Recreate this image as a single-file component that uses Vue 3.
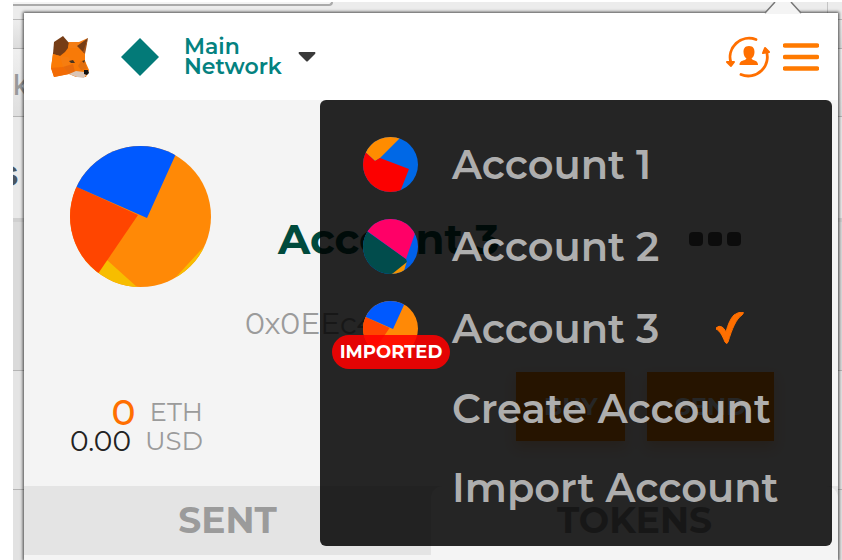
<template>
    <div class="browser">
        <div class="backdrop" aria-hidden="true">
            <div class="toolbar">
                <div class="address-bar"></div>
                <div class="toolbar-end"></div>
            </div>
            <div class="strip strip-nav"></div>
            <div class="strip strip-search">k</div>
            <div class="strip strip-tabs">s</div>
            <div class="strip strip-upper"></div>
            <div class="strip strip-lower"></div>
            <div class="strip strip-rest"></div>
        </div>
        <svg class="notch" viewBox="0 0 38 12" aria-hidden="true">
            <path d="M0 12 11 0H27L38 12Z" fill="#f4f4f4" />
            <path d="M1 11 11 0M27 0 37 11" fill="none" stroke="#777" stroke-width="1.5" />
        </svg>

        <main class="popup">
            <header class="app-header">
                <svg class="fox" viewBox="0 0 40 42" role="img" aria-label="Fox">
                    <path d="M3 17 19 6 29 6 35 17 35 25 39 34 36 41 26 41 19 38 4 41 1 32Z" fill="#f87a08" />
                    <path d="M13 0 19 7 18 12 15 16 10 20 3 18 4 6Z" fill="#763d16" />
                    <path d="M38 2 29 6 19 6 18 12 29 12Z" fill="#f47d14" />
                    <path d="M38 2 34 17 27 10Z" fill="#763d16" />
                    <path d="M38 2 36 13 35 18 33 16Z" fill="#a3531a" />
                    <path d="M3 18 10 20 15 30 1 32Z" fill="#fa7b06" />
                    <path d="M1 32 13 31 19 38 4 41Z" fill="#f26b05" />
                    <path d="M10 20 13 31 24 27 18 21Z" fill="#f67d10" />
                    <path d="M13 31 23 28 25 36 19 38Z" fill="#e86b0c" />
                    <path d="M31 25 35 25 37 33 31 34 28 30Z" fill="#e2700f" />
                    <path d="M19 38 26 35 34 36 36 39 34 42 27 41Z" fill="#dac5b6" />
                    <path d="M34 34 38 34 39 37 37 39 34 38Z" fill="#111" />
                    <path d="M19 25 23 24 25 27 21 27Z" fill="#4a3520" />
                    <path d="M32 25 35 24 34 27Z" fill="#4a3520" />
                </svg>
                <button class="network" type="button">
                    <svg class="diamond" viewBox="0 0 40 40" aria-hidden="true">
                        <path d="M20 1 39 20 20 39 1 20Z" fill="#037a78" />
                    </svg>
                    <span class="network-name">Main<br />Network</span>
                    <svg class="caret" viewBox="0 0 18 10" aria-hidden="true">
                        <path d="M1 0H17Q18 1 17 2L10 9Q9 10 8 9L1 2Q0 1 1 0Z" fill="#3a3a3a" />
                    </svg>
                </button>
                <div class="header-actions">
                    <button class="icon-button" type="button" aria-label="Switch account">
                        <svg class="switcher" viewBox="0 0 44 42" fill="none">
                            <path d="M30 3.500A19 19 0 0 0 5 27M15 38.500A19 19 0 0 0 40 14" stroke="#ff6f00" stroke-width="2.800" stroke-linecap="round" />
                            <path d="M1 26 8 26 5 30ZM37 17 39 12 43 16Z" fill="#ff6f00" stroke="#ff6f00" stroke-width="2" stroke-linejoin="round" />
                            <path d="M23 10C18.500 10 17.500 13 17.500 16C17.500 19.500 19 21.500 20.500 22.500L19 24C15.500 25 13.500 25.500 13.500 29H32C32 25.500 30 25 27 24L25.500 22.500C27 21.500 28.500 19.500 28.500 16C28.500 13 27.500 10 23 10Z" fill="#ff6f00" />
                        </svg>
                    </button>
                    <button class="icon-button" type="button" aria-label="Menu">
                        <svg class="hamburger" viewBox="0 0 36 28">
                            <path d="M2 2.500H34M2 14H34M2 25.500H34" stroke="#ff7a00" stroke-width="4.500" stroke-linecap="round" />
                        </svg>
                    </button>
                </div>
            </header>

            <div class="content">
                <section class="account">
                    <div class="account-side">
                        <svg class="identicon" viewBox="0 0 141 141" aria-hidden="true">
                            <clipPath id="round-main"><circle cx="70.500" cy="70.500" r="70.500" /></clipPath>
                            <g clip-path="url(#round-main)">
                                <path v-for="(shape, i) in accounts[2].shapes" :key="i" :d="shape.d" :fill="shape.fill" />
                            </g>
                        </svg>
                        <div class="balance">
                            <div class="balance-row">
                                <span class="eth">0</span><span class="unit">ETH</span>
                            </div>
                            <div class="balance-row">
                                <span class="usd">0.00</span><span class="unit">USD</span>
                            </div>
                        </div>
                    </div>
                    <div class="account-main">
                        <div class="name-row">
                            <h1 class="account-name">Account 3</h1>
                            <button class="dots" type="button" aria-label="Account options">
                                <i></i><i></i><i></i>
                            </button>
                        </div>
                        <p class="account-address">0x0EEc4</p>
                        <div class="buttons">
                            <button class="action" type="button">BUY</button>
                            <button class="action" type="button">SEND</button>
                        </div>
                    </div>
                </section>

                <nav class="tabs">
                    <button class="tab" type="button">SENT</button>
                    <button class="tab active" type="button">TOKENS</button>
                </nav>

                <div class="account-menu">
                    <button v-for="(account, index) in accounts" :key="account.name" class="menu-item" type="button">
                        <span class="menu-icon">
                            <svg class="identicon-small" :viewBox="account.viewBox" aria-hidden="true">
                                <clipPath :id="`round-${index}`">
                                    <circle :cx="account.radius" :cy="account.radius" :r="account.radius" />
                                </clipPath>
                                <g :clip-path="`url(#round-${index})`">
                                    <path v-for="(shape, i) in account.shapes" :key="i" :d="shape.d" :fill="shape.fill" />
                                </g>
                            </svg>
                            <span v-if="account.imported" class="badge">IMPORTED</span>
                        </span>
                        <span class="menu-label">{{ account.name }}</span>
                        <svg v-if="account.selected" class="check" viewBox="0 0 28 32" role="img" aria-label="Selected">
                            <path d="M0 16Q3 13 6 15Q8 16 10 20Q13 8 18 3Q22 0 27 0Q28 1 26 3C20 7 16 17 12 30Q11 33 9 30C6 23 4 19 0 17Z" fill="#ff6f00" stroke="#ff6f00" stroke-width="1" />
                        </svg>
                    </button>
                    <button v-for="action in actions" :key="action" class="menu-item menu-action" type="button">
                        <span class="menu-label">{{ action }}</span>
                    </button>
                </div>
            </div>
        </main>
    </div>
</template>

<script setup>
const accounts = [
    {
        name: 'Account 1',
        viewBox: '0 0 55 55',
        radius: 27.5,
        shapes: [
            { d: 'M0 0H55V55H0Z', fill: '#0068e6' },
            { d: 'M0 0H38L17 21 12 24 0 13Z', fill: '#ff8c00' },
            { d: 'M0 13 12 24 17 21 46 32 37 55H0Z', fill: '#fc0000' },
        ],
    },
    {
        name: 'Account 2',
        viewBox: '0 0 55 55',
        radius: 27.5,
        shapes: [
            { d: 'M0 0H55V55H0Z', fill: '#0060ea' },
            { d: 'M28 55 44 42 40 55Z', fill: '#f59300' },
            { d: 'M0 10 5 13 43 40 44 43 29 55H0Z', fill: '#014c4c' },
            { d: 'M0 9V0H57L43 40Z', fill: '#ff0067' },
        ],
    },
    {
        name: 'Account 3',
        viewBox: '0 0 141 141',
        radius: 70.5,
        imported: true,
        selected: true,
        shapes: [
            { d: 'M0 0H141V141H0Z', fill: '#ff8906' },
            { d: 'M37 114 67 141H0V114ZM141 94 130 105 106 131 106 141H141Z', fill: '#f7bd00' },
            { d: 'M0 38 7 41 68 69 19 141 0 141Z', fill: '#ff4500' },
            { d: 'M0 38V0H110L105 10 77 72Z', fill: '#0059ff' },
        ],
    },
]

const actions = ['Create Account', 'Import Account']
</script>

<style>
body {
    background: #ffffff;
}
</style>

<style scoped>
.browser {
    box-sizing: border-box;
    position: relative;
    display: flex;
    min-height: 100vh;
    padding: 13px 4px 0 24px;
    overflow: hidden;
    font-family: Montserrat, Inter, sans-serif;
}

button {
    padding: 0;
    border: 0;
    background: none;
    font-family: inherit;
    text-align: left;
}

svg {
    display: block;
    flex-shrink: 0;
}

/* page behind the popup */
.backdrop {
    position: absolute;
    inset: 2px 0 0 13px;
    display: flex;
    flex-direction: column;
    background: #e2e2e2;
}

.toolbar {
    display: flex;
    justify-content: space-between;
    height: 17px;
    background: #ececec;
    border-bottom: 1px solid #b9b9b9;
}

.address-bar {
    width: 318px;
    height: 2px;
    border-right: 2px solid #aaa;
    border-bottom: 2px solid #aaa;
    border-bottom-right-radius: 8px;
    background: #f4f4f4;
}

.toolbar-end {
    width: 14px;
    border-left: 1px solid #c4c4c4;
}

.strip {
    box-sizing: border-box;
    border-bottom: 1px solid #b4b4b4;
    color: #999;
    font-family: Inter, sans-serif;
    font-size: 28px;
    line-height: 32px;
}

.strip-nav {
    height: 29px;
    background: linear-gradient(#ededed, #dcdcdc);
}

.strip-search {
    height: 68px;
    padding-top: 20px;
    background: linear-gradient(#f0f0f0, #dedede);
    font-weight: 500;
}

.strip-tabs {
    height: 105px;
    padding-top: 40px;
    border-bottom: 4px solid #cfcfcf;
    background: #e9e9e9;
    color: #4a5560;
    font-size: 36px;
    font-weight: 600;
    text-indent: -14px;
    overflow: hidden;
}

.strip-upper {
    height: 149px;
    background: #dadada;
}

.strip-lower {
    height: 119px;
    background: #e4e4e4;
}

.strip-rest {
    flex: 1;
    border: 0;
}

.notch {
    position: absolute;
    top: 2px;
    right: 40px;
    z-index: 1;
    width: 38px;
    height: 12px;
}

.popup {
    position: relative;
    flex: 1;
    display: flex;
    flex-direction: column;
    background: #f4f4f4;
    box-shadow: 0 0 3px 1px rgba(0, 0, 0, 0.7);
}

.app-header {
    display: flex;
    align-items: center;
    height: 87px;
    padding: 0 19px 0 26px;
    background: #ffffff;
}

.fox {
    width: 40px;
    height: 42px;
}

.network {
    display: flex;
    align-items: center;
    margin-left: 30px;
}

.diamond {
    width: 40px;
    height: 40px;
}

.network-name {
    margin: 0 16px 0 24px;
    color: #048280;
    font-size: 22px;
    font-weight: 600;
    line-height: 20px;
}

.caret {
    width: 18px;
    height: 10px;
}

.header-actions {
    display: flex;
    align-items: center;
    gap: 13px;
    margin-left: auto;
}

.switcher {
    width: 44px;
    height: 42px;
}

.hamburger {
    width: 36px;
    height: 28px;
}

.content {
    position: relative;
    flex: 1;
}

.account {
    display: flex;
    gap: 34px;
    padding: 46px 64px 30px 46px;
}

.account-side {
    width: 141px;
}

.identicon {
    width: 141px;
    height: 141px;
}

.balance {
    margin-top: 111px;
    padding-right: 8px;
}

.balance-row {
    display: flex;
    align-items: center;
    justify-content: flex-end;
    gap: 14px;
    color: #222;
    font-size: 28px;
    line-height: 29px;
}

.eth {
    color: #ff6f00;
    font-size: 36px;
    font-weight: 500;
}

.unit {
    color: #9b9b9b;
    font-size: 26px;
}

.account-main {
    flex: 1;
}

.name-row {
    display: flex;
    align-items: center;
    justify-content: space-between;
    margin-top: 69px;
    padding: 0 33px;
}

.account-name {
    margin: 0;
    color: #004a3c;
    font-size: 42px;
    font-weight: 700;
    line-height: 48px;
}

.dots {
    display: flex;
    gap: 5px;
}

.dots i {
    width: 14px;
    height: 14px;
    border-radius: 4px;
    background: #555;
}

.account-address {
    margin: 43px 0 30px;
    color: #9b9b9b;
    font-size: 30px;
    line-height: 36px;
}

.buttons {
    display: flex;
    justify-content: flex-end;
    gap: 22px;
}

.action {
    padding: 0 28px;
    background: #ff8400;
    box-shadow: 0 6px 12px rgba(247, 134, 28, 0.3);
    color: #ffffff;
    font-size: 24px;
    font-weight: 700;
    line-height: 69px;
}

.tabs {
    display: flex;
    background: #e4e4e4;
}

.tab {
    flex: 1;
    color: #9b9b9b;
    font-size: 36px;
    font-weight: 700;
    line-height: 69px;
    text-align: center;
}

.tab.active {
    border-top-right-radius: 12px;
    border-top-left-radius: 12px;
    background: #f4f4f4;
}

.account-menu {
    position: absolute;
    top: 0;
    right: 6px;
    box-sizing: border-box;
    width: 512px;
    padding: 23px 0 19px;
    border-radius: 6px;
    background: rgba(0, 0, 0, 0.85);
}

.menu-item {
    display: flex;
    align-items: center;
    width: 100%;
    height: 82px;
    color: #aeaeae;
    font-size: 40px;
    font-weight: 600;
}

.menu-action {
    height: 79px;
    padding-left: 132px;
}

.menu-icon {
    position: relative;
    width: 55px;
    margin: 0 34px 0 43px;
}

.identicon-small {
    width: 55px;
    height: 55px;
}

.badge {
    position: absolute;
    top: 34px;
    left: -31px;
    width: 118px;
    border-radius: 17px;
    background: rgba(255, 0, 0, 0.88);
    color: #ffffff;
    font-size: 18px;
    font-weight: 700;
    line-height: 34px;
    text-align: center;
}

.check {
    width: 28px;
    height: 32px;
    margin-left: 57px;
}
</style>
